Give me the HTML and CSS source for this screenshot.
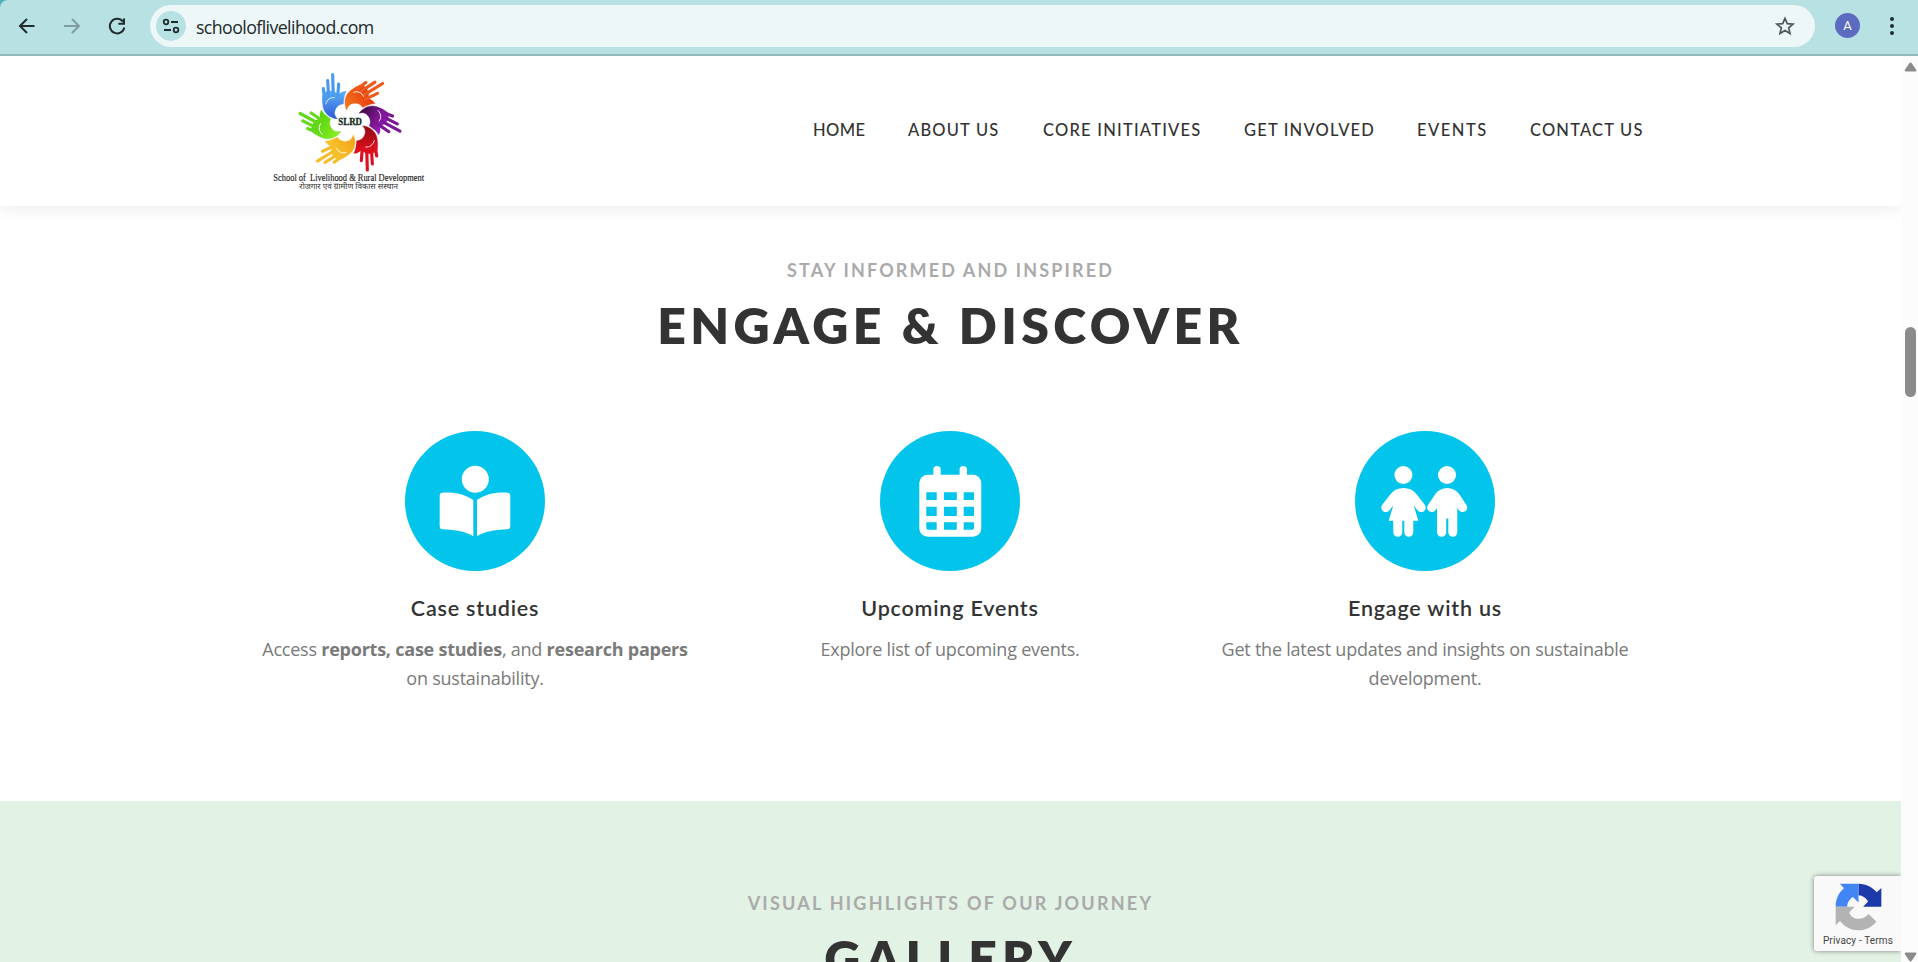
FILE: index.html
```
<!DOCTYPE html>
<html lang="en">
<head>
<meta charset="utf-8">
<title>School of Livelihood &amp; Rural Development</title>
<link rel="stylesheet" href="styles.css">
</head>
<body>
<div class="browser-bar">
  <div class="toolbar">
    <svg class="tool" viewBox="0 0 24 24"><path d="M19.500 12H5M12 5l-7 7 7 7"/></svg>
    <svg class="tool tool-muted" viewBox="0 0 24 24"><path d="M4 12h15M12 5l7 7-7 7"/></svg>
    <svg class="tool tool-reload" viewBox="0 0 24 24"><path d="M17.900 7.600A7.300 7.300 0 1 0 19.300 13.500M19 4.400V9.800H13.400"/></svg>
    <div class="omnibox">
      <span class="site-info"><svg viewBox="0 0 18 18"><circle cx="4" cy="5" r="2.300"/><path d="M9 5h7M2 13h7"/><circle cx="14" cy="13" r="2.300"/></svg></span>
      <span class="url">schooloflivelihood.com</span>
      <svg class="star" viewBox="0 0 24 24"><path d="M12 3.600l2.500 5.800 6.300.5-4.800 4.100 1.500 6.200-5.500-3.300-5.500 3.300 1.500-6.200-4.800-4.100 6.300-.5z"/></svg>
    </div>
    <span class="avatar">A</span>
    <svg class="more" viewBox="0 0 6 20"><circle cx="3" cy="3" r="2"/><circle cx="3" cy="10" r="2"/><circle cx="3" cy="17" r="2"/></svg>
  </div>
</div>
<div class="viewport">
  <div class="page">
    <header class="header">
      <svg class="logo" viewBox="0 0 540 450">
        <defs>
          <g id="hand">
            <path d="M189 140C186 124 186 108 190 100C206 90 224 90 235 105C241 98 249 94 259 94C251 108 252 118 250 132C236 132 226 143 224 158C224 166 228 172 233 177C210 175 192 160 189 140Z"/>
            <path class="finger" d="M195 120L190 86M206 112L203 62M220 112L218 44M233 112L236 72"/>
            <path class="crease" d="M197 133C201 118 211 112 224 113"/>
          </g>
          <linearGradient id="g1" x1="0" y1="0" x2="0" y2="1"><stop offset="0" stop-color="#5ab4f5"/><stop offset="1" stop-color="#3156d8"/></linearGradient>
          <linearGradient id="g2" x1="0" y1="0" x2="0" y2="1"><stop offset="0" stop-color="#e8380c"/><stop offset="1" stop-color="#f27a1e"/></linearGradient>
          <linearGradient id="g3" x1="0" y1="0" x2="0" y2="1"><stop offset="0" stop-color="#a01fc0"/><stop offset="1" stop-color="#3d0a3c"/></linearGradient>
          <linearGradient id="g4" x1="0" y1="0" x2="0" y2="1"><stop offset="0" stop-color="#e8101c"/><stop offset="1" stop-color="#8c0a14"/></linearGradient>
          <linearGradient id="g5" x1="0" y1="0" x2="0" y2="1"><stop offset="0" stop-color="#f7c829"/><stop offset="1" stop-color="#f3a01e"/></linearGradient>
          <linearGradient id="g6" x1="0" y1="0" x2="0" y2="1"><stop offset="0" stop-color="#55d010"/><stop offset="1" stop-color="#8cf020"/></linearGradient>
        </defs>
        <use href="#hand" fill="url(#g1)" stroke="#4a9af0"/>
        <use href="#hand" fill="url(#g2)" stroke="#ee5a1e" transform="rotate(60 270 187)"/>
        <use href="#hand" fill="url(#g3)" stroke="#7a1898" transform="rotate(120 270 187)"/>
        <use href="#hand" fill="url(#g4)" stroke="#dc1020" transform="rotate(180 270 187)"/>
        <use href="#hand" fill="url(#g5)" stroke="#f5bd2b" transform="rotate(240 270 187)"/>
        <use href="#hand" fill="url(#g6)" stroke="#66d81c" transform="rotate(300 270 187)"/>
        <text class="logo-mark" x="235" y="196" textLength="71" lengthAdjust="spacingAndGlyphs">SLRD</text>
        <text class="logo-name" x="40" y="362" textLength="452" lengthAdjust="spacingAndGlyphs">School of  Livelihood &amp; Rural Development</text>
        <text class="logo-hindi" x="118" y="386" textLength="296" lengthAdjust="spacingAndGlyphs">रोजगार एवं ग्रामीण विकास संस्थान</text>
      </svg>
      <nav class="nav">
        <a class="n1">HOME</a><a class="n2">ABOUT US</a><a class="n3">CORE INITIATIVES</a><a class="n2">GET INVOLVED</a><a class="n4">EVENTS</a><a class="n2">CONTACT US</a>
      </nav>
    </header>
    <section class="engage">
      <p class="eyebrow">STAY INFORMED AND INSPIRED</p>
      <h2 class="heading">ENGAGE &amp; DISCOVER</h2>
      <div class="cards">
        <article class="card">
          <svg class="badge" viewBox="0 0 140 140"><circle class="disc" cx="70" cy="70" r="70"/><circle cx="70.300" cy="48.300" r="13.500"/><path d="M37.500 61.700C50 61 60 63.500 68.300 69V105.300C60 100.500 52 99 37.500 98.300Q34.700 98 34.700 95.500V64.500Q34.700 61.900 37.500 61.700ZM102.500 61.700C90 61 80 63.500 72 69V105.300C80 100.500 88 99 102.500 98.300Q105.300 98 105.300 95.500V64.500Q105.300 61.900 102.500 61.700Z"/></svg>
          <h3>Case studies</h3>
          <p>Access <b>reports, case studies</b>, and <b>research papers</b><br>on sustainability.</p>
        </article>
        <article class="card">
          <svg class="badge" viewBox="0 0 140 140"><circle class="disc" cx="70" cy="70" r="70"/><rect x="53.300" y="35" width="7.400" height="16" rx="3.700"/><rect x="79.600" y="35" width="7.400" height="16" rx="3.700"/><rect x="39.300" y="43.700" width="62" height="62" rx="8.500"/><path class="disc" d="M46.300 61.300h10.400v7.700H46.300zM64 61.300h12.800v7.700H64zM83.700 61.300H94v7.700H83.700zM46.300 75.700h10.400v9.300H46.300zM64 75.700h12.800v9.300H64zM83.700 75.700H94v9.300H83.700zM46.300 91.300h10.400v7.400h-8.600q-1.800 0-1.800-1.800zM64 91.300h12.800v7.400H64zM83.700 91.300H94v5.600q0 1.800-1.800 1.800h-8.500z"/></svg>
          <h3>Upcoming Events</h3>
          <p>Explore list of upcoming events.</p>
        </article>
        <article class="card">
          <svg class="badge" viewBox="0 0 140 140"><circle class="disc" cx="70" cy="70" r="70"/><circle cx="48.400" cy="44" r="9"/><circle cx="92" cy="44" r="9"/>
            <path class="arm" d="M48.500 61.600Q42.500 61.600 39 66L30.900 76.500M48.500 61.600Q54.500 61.600 58 66L66.100 76.500M92.200 61.600Q87 61.600 83.500 66.500L76.800 76.500M92.200 61.600Q97.500 61.600 101 66.500L107.600 76.500"/>
            <path d="M40 60H57L59.200 76L63.300 89.800H58.300V101.300A4.500 4.500 0 0 1 49.300 101.300V89.800H47.300V101.300A4.500 4.500 0 0 1 38.300 101.300V89.800H33.700L37.800 76Z"/>
            <path d="M82 63H102.300V101.200A4.500 4.500 0 0 1 93.300 101.200V87.500H91.200V101.200A4.500 4.500 0 0 1 82 101.200Z"/></svg>
          <h3>Engage with us</h3>
          <p>Get the latest updates and insights on sustainable<br>development.</p>
        </article>
      </div>
    </section>
    <section class="gallery">
      <p class="eyebrow eyebrow-wide">VISUAL HIGHLIGHTS OF OUR JOURNEY</p>
      <h2 class="heading heading-wide">GALLERY</h2>
    </section>
    <aside class="recaptcha">
      <svg viewBox="163 99 142 145"><path fill="#1c3aa9" d="M234 101C258 101 277 112 289 127L303 114V171H248L263 155C257 144 247 137 234 136Z"/><path fill="#4285f4" d="M234 101H178L190 115C174 128 165 148 165 171H200C200 158 207 147 217 141L234 158Z"/><path fill="#b3b3b3" d="M165 171V227L178 214C192 232 212 242 234 242C256 242 275 232 288 215L264 193C257 203 246 207 234 207C221 207 211 201 206 188L222 171Z"/></svg>
      <span>Privacy - Terms</span>
    </aside>
  </div>
  <div class="scrollbar">
    <svg class="up" viewBox="0 0 13 10"><path d="M1.500 9.500Q0 9 1 7.500L5.500 1Q6.500 0 7.500 1L12 7.500Q13 9 11.500 9.500Z"/></svg>
    <div class="thumb"></div>
    <svg class="down" viewBox="0 0 13 10"><path d="M1.500 .5Q0 1 1 2.500L5.500 9Q6.500 10 7.500 9L12 2.500Q13 1 11.500 .5Z"/></svg>
  </div>
</div>
</body>
</html>
```
FILE: styles.css
```
* { box-sizing: border-box; }
body { margin: 0; height: 962px; overflow: hidden; background: #fff; font-family: "Open Sans", sans-serif; display: flex; flex-direction: column; }
h2, h3, p { margin: 0; }
svg { display: block; flex: none; }

.browser-bar { height: 56px; flex: none; background: #4db0b3; }
.toolbar { height: 56px; display: flex; align-items: center; padding: 0 0 3px 15px; background: #b8e1e4; border-bottom: 2px solid #92b8bb; border-top-left-radius: 8px; }
.tool { width: 24px; height: 24px; margin-right: 21px; fill: none; stroke: #1f2c2e; stroke-width: 2; }
.tool-muted { stroke: #7f9da0; }
.omnibox { width: 1665px; height: 42px; border-radius: 21px; background: #edf7f8; display: flex; align-items: center; padding: 0 19px 0 6px; }
.site-info { width: 30px; height: 30px; border-radius: 50%; background: #b8e1e4; display: grid; place-items: center; }
.site-info svg { width: 18px; height: 18px; fill: none; stroke: #1f2c2e; stroke-width: 1.8; }
.url { flex: 1; margin: 2px 0 0 10px; font-size: 17.800px; letter-spacing: -.6px; color: #202a2c; line-height: 24px; }
.star { width: 22px; height: 22px; fill: none; stroke: #4a5557; stroke-width: 1.800; }
.avatar { width: 25px; height: 25px; margin-left: 20px; border-radius: 50%; background: #5c6bc0; color: #fff; font: 13px/25px Roboto, sans-serif; text-align: center; }
.more { width: 6px; height: 20px; margin-left: 29px; fill: #1f2c2e; }

.viewport { display: flex; height: 906px; }
.page { position: relative; width: 1901px; height: 906px; overflow: hidden; }
.header { position: relative; height: 150px; display: flex; justify-content: space-between; background: #fff; box-shadow: 0 0 18px rgba(0, 0, 0, .1); padding: 4px 257px 0 260px; }
.logo { width: 180px; height: 150px; }
.finger { stroke-width: 9.500; stroke-linecap: round; fill: none; }
.crease { fill: none; stroke: #fff; stroke-width: 2.500; }
.logo-mark { font: bold 28px "Liberation Serif", serif; fill: #102a1c; stroke: #102a1c; stroke-width: .8; }
.logo-name { font: 32px "Liberation Serif", serif; fill: #222; stroke: #222; stroke-width: .5; white-space: pre; }
.logo-hindi { font: 25px "Noto Sans Devanagari", "Noto Sans", sans-serif; fill: #333; }
.nav { display: grid; grid-template-columns: 95px 135px 201px 173px 113px 115px; padding-top: 60px; margin-right: -1px; font: 500 16.500px/21px Lato, sans-serif; color: #333; white-space: nowrap; }
.n1 { letter-spacing: .45px; }
.n2 { letter-spacing: 1.180px; }
.n3 { letter-spacing: 1.230px; }
.n4 { letter-spacing: 1.500px; }

.engage { height: 595px; padding: 50px 238px 0; }
.eyebrow { font: 700 18px/28px Lato, sans-serif; letter-spacing: 2.130px; color: #aaa; text-align: center; }
.eyebrow-wide { letter-spacing: 2.230px; }
.heading { margin-top: 11px; font: 800 50px/60px Lato, sans-serif; letter-spacing: 4.400px; color: #333; text-align: center; }
.heading-wide { letter-spacing: 5.130px; }
.cards { display: grid; grid-template-columns: repeat(3, 475px); margin: 76px 0 0 -.5px; }
.card { display: flex; flex-direction: column; align-items: center; text-align: center; }
.badge { width: 140px; height: 140px; fill: #fff; }
.disc { fill: #03c4eb; }
.arm { fill: none; stroke: #fff; stroke-width: 9.200; stroke-linecap: round; }
.card h3 { margin-top: 22px; font: 600 21.500px/30px Lato, sans-serif; letter-spacing: .8px; color: #333; }
.card p { margin-top: 12px; font-size: 18px; line-height: 29px; letter-spacing: -.23px; color: #7a7a7a; white-space: nowrap; }

.gallery { height: 300px; padding-top: 88px; background: #e2f2e4; }
.recaptcha { position: absolute; right: 0; top: 820px; width: 87px; height: 75px; border-radius: 3px 0 0 3px; background: #f9f9f9; box-shadow: 0 0 5px #808080; display: flex; flex-direction: column; align-items: center; padding: 7px 0 0 1px; }
.recaptcha svg { width: 47px; height: 48px; }
.recaptcha span { margin-top: 4px; font: 10px/12px Roboto, sans-serif; letter-spacing: .15px; color: #444; }

.scrollbar { width: 17px; height: 906px; background: #fcfcfc; display: flex; flex-direction: column; align-items: center; padding: 6px 0 0 2px; fill: #8b8b8b; }
.scrollbar svg { width: 13px; height: 10px; }
.thumb { width: 11px; height: 71px; margin-top: 255px; border-radius: 6px; background: #8b8b8b; }
.down { margin-top: 555px; }
```
